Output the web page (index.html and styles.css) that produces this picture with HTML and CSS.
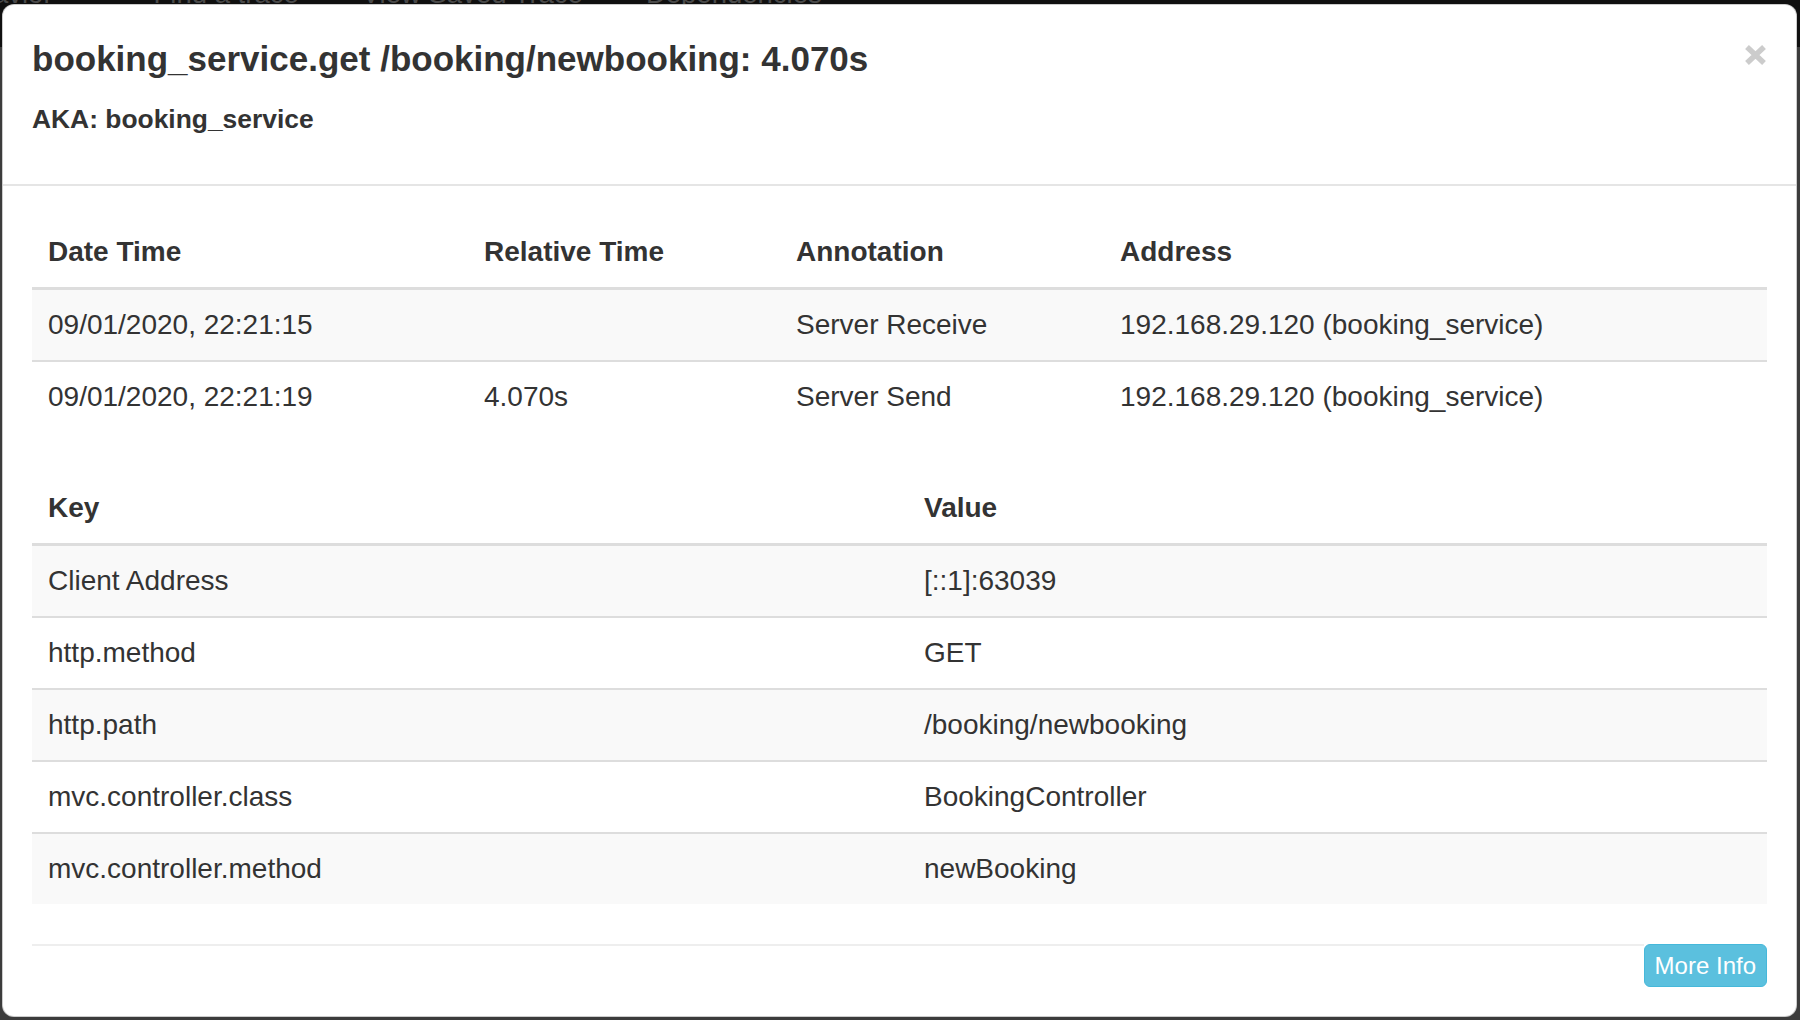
FILE: index.html
```html
<!DOCTYPE html>
<html lang="en">
<head>
<meta charset="utf-8">
<title>booking_service.get /booking/newbooking</title>
<link rel="stylesheet" href="styles.css">
</head>
<body>
<div class="page">
  <nav class="topnav">
    <span class="nav-item first">Behavior</span>
    <span class="nav-item">Find a trace</span>
    <span class="nav-item">View Saved Trace</span>
    <span class="nav-item">Dependencies</span>
  </nav>

  <div class="modal">
    <div class="modal-header">
      <div class="titles">
        <h4 class="title">booking_service.get /booking/newbooking: 4.070s</h4>
        <h5 class="aka">AKA: booking_service</h5>
      </div>
      <button class="close" type="button" aria-label="Close">
        <svg width="21" height="20" viewBox="0 0 21 20"><path d="M2 2 L19 18 M19 2 L2 18" fill="none" stroke="#cccccc" stroke-width="5.5"/></svg>
      </button>
    </div>

    <div class="modal-body">
      <table class="table annotations">
        <colgroup>
          <col class="c-date"><col class="c-rel"><col class="c-ann"><col>
        </colgroup>
        <thead>
          <tr><th>Date Time</th><th>Relative Time</th><th>Annotation</th><th>Address</th></tr>
        </thead>
        <tbody>
          <tr><td>09/01/2020, 22:21:15</td><td></td><td>Server Receive</td><td>192.168.29.120 (booking_service)</td></tr>
          <tr><td>09/01/2020, 22:21:19</td><td>4.070s</td><td>Server Send</td><td>192.168.29.120 (booking_service)</td></tr>
        </tbody>
      </table>

      <table class="table binary">
        <colgroup>
          <col class="c-key"><col>
        </colgroup>
        <thead>
          <tr><th>Key</th><th>Value</th></tr>
        </thead>
        <tbody>
          <tr><td>Client Address</td><td>[::1]:63039</td></tr>
          <tr><td>http.method</td><td>GET</td></tr>
          <tr><td>http.path</td><td>/booking/newbooking</td></tr>
          <tr><td>mvc.controller.class</td><td>BookingController</td></tr>
          <tr><td>mvc.controller.method</td><td>newBooking</td></tr>
        </tbody>
      </table>

      <div class="footer">
        <div class="rule"></div>
        <button class="btn-info" type="button">More Info</button>
      </div>
    </div>
  </div>
</div>
</body>
</html>
```

FILE: styles.css
```css
html, body {
  margin: 0;
  padding: 0;
}

body {
  width: 1800px;
  height: 1020px;
  overflow: hidden;
  background: #3c3c3c;
  font-family: "Liberation Sans", Arial, Helvetica, sans-serif;
  color: #333333;
}

.page {
  position: relative;
  width: 1800px;
  height: 1020px;
  background: #3c3c3c;
}

.topnav {
  height: 47px;
  background: #101010;
  display: flex;
  overflow: hidden;
  gap: 63px;
}

.nav-item {
  font-size: 27.5px;
  line-height: 28px;
  margin-top: -20px;
  color: #4a4a4a;
  white-space: nowrap;
}

.nav-item.first {
  margin-left: -56px;
  margin-right: 38px;
}

.modal {
  position: absolute;
  top: 4px;
  left: 2px;
  width: 1795px;
  box-sizing: border-box;
  background: #ffffff;
  border: 1px solid rgba(0, 0, 0, 0.2);
  border-radius: 12px;
}

.modal-header {
  display: flex;
  justify-content: space-between;
  align-items: flex-start;
  padding: 29px 29px 45px;
  border-bottom: 2px solid #e5e5e5;
}

.title {
  margin: 0;
  font-size: 35px;
  line-height: 50px;
  font-weight: bold;
  color: #333333;
}

.aka {
  margin: 15px 0 0;
  font-size: 26.4px;
  line-height: 40px;
  font-weight: bold;
  color: #333333;
}

.close {
  margin: 11px 1px 0 0;
  padding: 0;
  border: 0;
  background: none;
  display: block;
  line-height: 0;
}

.modal-body {
  padding: 31px 29px 29px;
}

.table {
  width: 100%;
  border-collapse: separate;
  border-spacing: 0;
  table-layout: fixed;
  font-size: 28px;
}

.annotations {
  margin-bottom: 41px;
}

.binary {
  margin-bottom: 40px;
}

.c-date { width: 436px; }
.c-rel { width: 312px; }
.c-ann { width: 324px; }
.c-key { width: 876px; }

.table th {
  text-align: left;
  font-weight: bold;
  padding: 15px 16px;
  line-height: 40px;
  border-bottom: 3px solid #dddddd;
  white-space: nowrap;
}

.table td {
  padding: 15px 16px;
  line-height: 40px;
  white-space: nowrap;
}

.table tbody tr + tr td {
  border-top: 2px solid #dddddd;
}

.table tbody tr:nth-child(odd) td {
  background: #f9f9f9;
}

.footer {
  display: flex;
  align-items: flex-start;
}

.rule {
  flex: 1;
  border-top: 2px solid #eeeeee;
}

.btn-info {
  font-family: "Liberation Sans", Arial, Helvetica, sans-serif;
  font-size: 24px;
  line-height: 33px;
  padding: 4px 10px;
  color: #ffffff;
  background: #5bc0de;
  border: 1px solid #46b8da;
  border-radius: 6px;
}
```
